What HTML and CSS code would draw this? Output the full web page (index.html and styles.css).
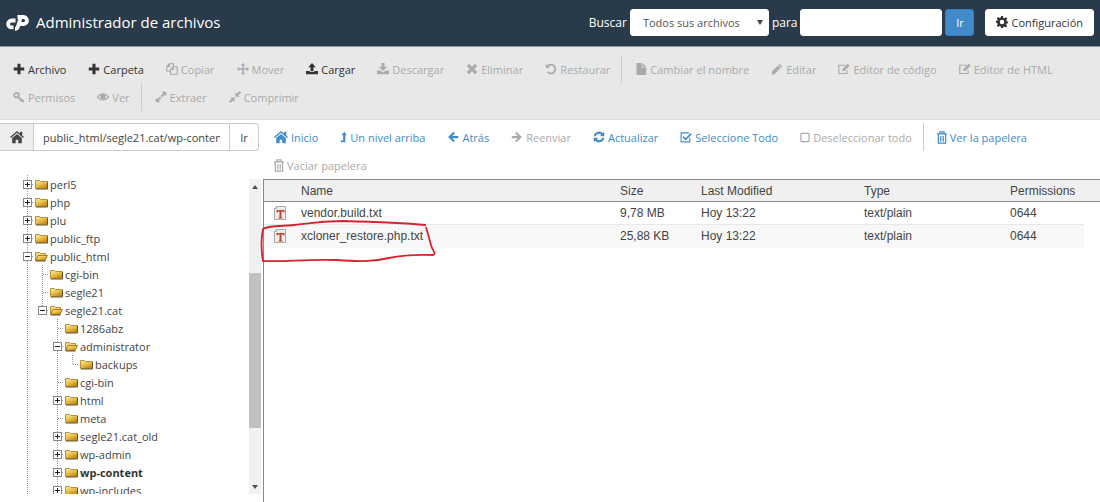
FILE: index.html
```html
<!DOCTYPE html>
<html lang="es">
<head>
    <meta charset="UTF-8">
    <meta name="viewport" content="width=device-width, initial-scale=1.0">
    <title>Administrador de archivos</title>
    <link rel="stylesheet" href="styles.css">
</head>
<body>
    <!-- Iconos -->
    <svg class="sprite" aria-hidden="true">
        <symbol id="plus" viewBox="0 0 16 16"><path d="M6 1h4v5h5v4h-5v5H6v-5H1V6h5z"/></symbol>
        <symbol id="copy" viewBox="0 0 16 16"><path d="M4.500 1H10v4M4.500 1L1 4.500V11h5M1 4.500h3.500V1M9.500 5H15v10H6V8.500L9.500 5zM6 8.500h3.500V5" class="line"/></symbol>
        <symbol id="move" viewBox="0 0 16 16"><path d="M8 0l3 3H9v4h4V5l3 3-3 3V9H9v4h2l-3 3-3-3h2V9H3v2L0 8l3-3v2h4V3H5z"/></symbol>
        <symbol id="upload" viewBox="0 0 16 16"><path d="M8 0l5 5.500h-3V11H6V5.500H3zM0 10.500h5V12h6v-1.500h5V15H0z"/></symbol>
        <symbol id="download" viewBox="0 0 16 16"><path d="M6 0h4v5h3.500L8 10.500 2.500 5H6zM0 10h4.500L8 13l3.500-3H16v5H0z"/></symbol>
        <symbol id="times" viewBox="0 0 16 16"><path d="M4 1l4 4 4-4 3 3-4 4 4 4-3 3-4-4-4 4-3-3 4-4-4-4z"/></symbol>
        <symbol id="undo" viewBox="0 0 16 16"><path d="M1 1l2 2a7 7 0 1 1-.500 9.500L4.500 11A4.500 4.500 0 1 0 4.800 4.800L6.500 6.500H1z"/></symbol>
        <symbol id="file" viewBox="0 0 16 16"><path d="M2 0h7v6h6v10H2zM10 0l5 5h-5z"/></symbol>
        <symbol id="pencil" viewBox="0 0 16 16"><path d="M11.500 1L15 4.500 13.500 6 10 2.500zM9.300 3.200l3.500 3.500L5 14.500 1 15.500 1.500 11z"/></symbol>
        <symbol id="edit" viewBox="0 0 16 16"><path d="M12 9.500V14H1V3h9" class="line"/><path d="M13 1l2.500 2.500-7 7H6V8z"/></symbol>
        <symbol id="key" viewBox="0 0 16 16"><path d="M4.500 2.500a3 3 0 1 0 .1 0zM6.500 8l8 6M11 11l-1.800 2.500M14 12l-2 2.800M7 4.500L9 3" class="line bold"/></symbol>
        <symbol id="eye" viewBox="0 0 16 16"><path d="M.500 8Q8-.500 15.500 8 8 16 .500 8z" class="line"/><circle cx="8" cy="7.500" r="3.500"/></symbol>
        <symbol id="expand" viewBox="0 0 16 16"><path d="M9 1h6v6l-2-2-3.500 3.500-2-2L11 3zM1 9l2 2 3.500-3.500 2 2L5 13l2 2H1z"/></symbol>
        <symbol id="compress" viewBox="0 0 16 16"><path d="M8.500 1.500l2 2L14 0l2 2-3.500 3.500 2 2h-6zM1.500 8.500h6v6l-2-2L2 16l-2-2 3.500-3.500z"/></symbol>
        <symbol id="home" viewBox="0 0 16 16"><path d="M8 1l3.500 3V2H14v4.200l2 1.800-1 1-7-6-7 6-1-1zM8 4.500l5.500 4.700V15H9.500v-4h-3v4h-4V9.200z"/></symbol>
        <symbol id="level-up" viewBox="0 0 9 16"><path d="M5.500 1L9 5.500H7V15H1.500L0 12.500h4v-7H2z"/></symbol>
        <symbol id="left" viewBox="0 0 16 16"><path d="M8.500 1l2 2-3.500 3.500H15v3H7l3.500 3.500-2 2-7-7z"/></symbol>
        <symbol id="right" viewBox="0 0 16 16"><path d="M7.500 1l-2 2L9 6.500H1v3h8L5.500 13l2 2 7-7z"/></symbol>
        <symbol id="refresh" viewBox="0 0 16 16"><path d="M1 7a7 7 0 0 1 12-4l2-2v6H9l2-2a4.500 4.500 0 0 0-7.500 2zM15 9a7 7 0 0 1-12 4l-2 2V9h6l-2 2a4.500 4.500 0 0 0 7.500-2z"/></symbol>
        <symbol id="check" viewBox="0 0 16 16"><path d="M13 9v5.500H1.500V2.500H12" class="line"/><path d="M4 7.500l3.500 3.500L15 3.500" class="line bold"/></symbol>
        <symbol id="square" viewBox="0 0 12 16"><rect x="1" y="3" width="10" height="10" rx="1" class="line"/></symbol>
        <symbol id="trash" viewBox="0 0 12 16"><path d="M0 3.500h12M3.500 3V1h5v2M1.500 4v11h9V4M4.500 6v7M7.500 6v7" class="line"/></symbol>
        <symbol id="cog" viewBox="0 0 16 16"><path fill-rule="evenodd" d="M6.700 0h2.600l.4 2.200 1.600.7L13.200 1.600 15 3.400l-1.300 1.900.7 1.600 1.600.300v2.500l-1.700.4-.7 1.600 1.300 1.900-1.800 1.800-1.900-1.300-1.500.7L9.300 16H6.700l-.4-2-1.600-.7-1.900 1.300L1 12.800l1.300-1.900-.7-1.600L0 9V6.800l1.700-.4.6-1.500L1 3.200 2.800 1.400l1.900 1.300 1.600-.6zM8 5a3 3 0 1 0 0 6 3 3 0 0 0 0-6z"/></symbol>
        <linearGradient id="gold" x2="0.600" y2="1"><stop stop-color="#fff0a0"/><stop offset="0.500" stop-color="#ecc552"/><stop offset="1" stop-color="#c68a18"/></linearGradient>
        <symbol id="folder" viewBox="0 0 13 11"><path d="M.500 9.500v-8h4l1 1h7v7z" fill="url(#gold)" stroke="#b8913a"/><path d="M1 10h11.500V3" fill="none" stroke="#68532a"/></symbol>
        <symbol id="folder-open" viewBox="0 0 13 11"><path d="M.500 9.500v-8h4l1 1h5v2" fill="#f3d675" stroke="#b8913a"/><path d="M.500 9.500l2.500-5h9.500L10 9.500z" fill="url(#gold)" stroke="#a97b22"/><path d="M1 10h9.500" stroke="#68532a"/></symbol>
        <symbol id="text-file" viewBox="0 0 12 15"><path d="M2.500 .500h9v13h-11v-11z" fill="#f1eeec" stroke="#aaa6a3"/><path d="M.500 2.500h2v-2" fill="#fff" stroke="#aaa6a3"/><path d="M2.500 4h8v2.500H9.500L9 5.500H7.500v6h1v1h-4v-1h1v-6H4l-.500 1h-1z" fill="#c1452f"/></symbol>
    </svg>

    <header class="header">
        <svg class="logo" viewBox="0 0 25 17" role="img" aria-label="cPanel">
            <path d="M10.500 6.500H6.500a3.400 3.400 0 0 0 0 6.800H8.500"/>
            <path d="M12.500 3h6a3.500 3.500 0 0 1 0 7H15M15.500 4L12.800 13q-.5 1.800-2.800 1.800"/>
        </svg>
        <h1>Administrador de archivos</h1>
        <form class="search">
            <label for="scope">Buscar</label>
            <select id="scope"><option>Todos sus archivos</option></select>
            <label for="query">para</label>
            <input id="query" type="text">
            <button type="button" class="primary">Ir</button>
            <button type="button" class="settings"><svg class="icon"><use href="#cog"/></svg>Configuración</button>
        </form>
    </header>

    <div class="toolbar">
        <button><svg class="icon"><use href="#plus"/></svg>Archivo</button>
        <button><svg class="icon"><use href="#plus"/></svg>Carpeta</button>
        <button disabled><svg class="icon"><use href="#copy"/></svg>Copiar</button>
        <button disabled><svg class="icon"><use href="#move"/></svg>Mover</button>
        <button><svg class="icon"><use href="#upload"/></svg>Cargar</button>
        <button disabled><svg class="icon"><use href="#download"/></svg>Descargar</button>
        <button disabled><svg class="icon"><use href="#times"/></svg>Eliminar</button>
        <button disabled class="divider"><svg class="icon"><use href="#undo"/></svg>Restaurar</button>
        <button disabled><svg class="icon"><use href="#file"/></svg>Cambiar el nombre</button>
        <button disabled><svg class="icon"><use href="#pencil"/></svg>Editar</button>
        <button disabled><svg class="icon"><use href="#edit"/></svg>Editor de código</button>
        <button disabled><svg class="icon"><use href="#edit"/></svg>Editor de HTML</button>
        <button disabled><svg class="icon"><use href="#key"/></svg>Permisos</button>
        <button disabled class="divider"><svg class="icon"><use href="#eye"/></svg>Ver</button>
        <button disabled><svg class="icon"><use href="#expand"/></svg>Extraer</button>
        <button disabled><svg class="icon"><use href="#compress"/></svg>Comprimir</button>
    </div>

    <main class="main">
        <aside class="sidebar">
            <form class="path">
                <button type="button" class="path-home" aria-label="Inicio"><svg class="icon"><use href="#home"/></svg></button>
                <input type="text" aria-label="Ruta" value="public_html/segle21.cat/wp-content">
                <button type="button" class="path-go">Ir</button>
            </form>
            <div class="tree-box">
                <ul class="tree">
                    <li><div class="row"><span class="toggle"></span><svg class="folder"><use href="#folder"/></svg>perl5</div></li>
                    <li><div class="row"><span class="toggle"></span><svg class="folder"><use href="#folder"/></svg>php</div></li>
                    <li><div class="row"><span class="toggle"></span><svg class="folder"><use href="#folder"/></svg>plu</div></li>
                    <li><div class="row"><span class="toggle"></span><svg class="folder"><use href="#folder"/></svg>public_ftp</div></li>
                    <li><div class="row"><span class="toggle open"></span><svg class="folder"><use href="#folder-open"/></svg>public_html</div>
                        <ul>
                            <li><div class="row"><svg class="folder"><use href="#folder"/></svg>cgi-bin</div></li>
                            <li><div class="row"><svg class="folder"><use href="#folder"/></svg>segle21</div></li>
                            <li class="last"><div class="row"><span class="toggle open"></span><svg class="folder"><use href="#folder-open"/></svg>segle21.cat</div>
                                <ul>
                                    <li><div class="row"><svg class="folder"><use href="#folder"/></svg>1286abz</div></li>
                                    <li><div class="row"><span class="toggle open"></span><svg class="folder"><use href="#folder-open"/></svg>administrator</div>
                                        <ul>
                                            <li class="last"><div class="row"><svg class="folder"><use href="#folder"/></svg>backups</div></li>
                                        </ul>
                                    </li>
                                    <li><div class="row"><svg class="folder"><use href="#folder"/></svg>cgi-bin</div></li>
                                    <li><div class="row"><span class="toggle"></span><svg class="folder"><use href="#folder"/></svg>html</div></li>
                                    <li><div class="row"><svg class="folder"><use href="#folder"/></svg>meta</div></li>
                                    <li><div class="row"><span class="toggle"></span><svg class="folder"><use href="#folder"/></svg>segle21.cat_old</div></li>
                                    <li><div class="row"><span class="toggle"></span><svg class="folder"><use href="#folder"/></svg>wp-admin</div></li>
                                    <li><div class="row current"><span class="toggle"></span><svg class="folder"><use href="#folder"/></svg>wp-content</div></li>
                                    <li><div class="row"><span class="toggle"></span><svg class="folder"><use href="#folder"/></svg>wp-includes</div></li>
                                </ul>
                            </li>
                        </ul>
                    </li>
                </ul>
                <div class="scrollbar">
                    <span class="arrow up"></span>
                    <div class="track"><div class="thumb"></div></div>
                    <span class="arrow down"></span>
                </div>
            </div>
        </aside>

        <section class="files">
            <nav class="actions">
                <button><svg class="icon big"><use href="#home"/></svg>Inicio</button>
                <button><svg class="icon thin"><use href="#level-up"/></svg>Un nivel arriba</button>
                <button><svg class="icon"><use href="#left"/></svg>Atrás</button>
                <button disabled><svg class="icon"><use href="#right"/></svg>Reenviar</button>
                <button><svg class="icon"><use href="#refresh"/></svg>Actualizar</button>
                <button><svg class="icon"><use href="#check"/></svg>Seleccione Todo</button>
                <button disabled class="divider"><svg class="icon small"><use href="#square"/></svg>Deseleccionar todo</button>
                <button><svg class="icon small"><use href="#trash"/></svg>Ver la papelera</button>
                <button disabled><svg class="icon small"><use href="#trash"/></svg>Vaciar papelera</button>
            </nav>
            <div class="list">
                <table>
                    <thead>
                        <tr><th class="c-icon"></th><th>Name</th><th class="c-size">Size</th><th class="c-date">Last Modified</th><th class="c-type">Type</th><th class="c-perm">Permissions</th><th class="c-end"></th></tr>
                    </thead>
                    <tbody>
                        <tr><td><svg class="doc"><use href="#text-file"/></svg></td><td>vendor.build.txt</td><td>9,78 MB</td><td>Hoy 13:22</td><td>text/plain</td><td>0644</td><td class="c-end"></td></tr>
                        <tr><td><svg class="doc"><use href="#text-file"/></svg></td><td>xcloner_restore.php.txt</td><td>25,88 KB</td><td>Hoy 13:22</td><td>text/plain</td><td>0644</td><td class="c-end"></td></tr>
                    </tbody>
                </table>
                <!-- Marca roja sobre el archivo -->
                <svg class="mark" viewBox="0 0 180 46"><path d="M167 6C145 4 120 3 84 2 50 2 48 6 20 7Q6 8 4 10 1 24 4 42C28 43 45 40 78 41 105 43 116 42 130 39 150 35 158 36 174 36 178 35 173 31 172 26L167 8"/></svg>
            </div>
        </section>
    </main>
</body>
</html>
```
FILE: styles.css
```css
* {
    box-sizing: border-box;
}

body {
    margin: 0;
    height: 100vh;
    display: flex;
    flex-direction: column;
    overflow: hidden;
    background: #fff;
    color: #444;
    font-family: "Open Sans", sans-serif;
    font-size: 11px;
}

button,
input,
select {
    font: inherit;
    color: inherit;
    margin: 0;
}

button {
    cursor: pointer;
}

.sprite {
    position: absolute;
    width: 0;
    height: 0;
}

.line {
    fill: none;
    stroke: currentColor;
    stroke-width: 1.5;
}

.bold {
    stroke-width: 2.2;
}

.icon {
    width: 12px;
    height: 12px;
    flex: none;
    fill: currentColor;
}

.icon.big {
    width: 14px;
    height: 14px;
}

.icon.small {
    width: 10px;
    height: 13px;
}

.icon.thin {
    width: 7px;
}

/* Cabecera */
.header {
    display: flex;
    align-items: center;
    height: 47px;
    flex: none;
    padding: 0 6px 2px 5px;
    background: #293a4a;
    border-bottom: 1px solid #8897a5;
    color: #fff;
}

.logo {
    width: 25px;
    height: 17px;
    fill: none;
    stroke: #fff;
    stroke-width: 3.8;
}

.header h1 {
    margin: 0 0 0 6px;
    font-size: 15px;
    font-weight: 400;
}

.search {
    display: flex;
    align-items: center;
    gap: 3px;
    margin-left: auto;
}

.search label {
    font-size: 12px;
}

.search select,
.search input,
.search button {
    height: 27px;
    border: 1px solid #fff;
    border-radius: 3px;
    background: #fff;
    color: #555;
}

.search select {
    width: 139px;
    padding: 0 12px;
    appearance: none;
    background: #fff url("data:image/svg+xml,%3Csvg xmlns='http://www.w3.org/2000/svg' viewBox='0 0 6 5'%3E%3Cpath d='M0 0h6L3 5z' fill='%23444'/%3E%3C/svg%3E") no-repeat right 5px center / 6px 5px;
}

.search input {
    width: 142px;
}

.search .primary {
    width: 29px;
    padding: 0;
    background: #428bca;
    border-color: #357ebd;
    color: #fff;
}

.search .settings {
    display: flex;
    align-items: center;
    gap: 3px;
    margin-left: 8px;
    padding: 0 10px;
    color: #333;
}

/* Barras de botones */
.toolbar,
.actions {
    display: flex;
    flex-wrap: wrap;
    flex: none;
}

.toolbar {
    padding: 8px 2px;
    background: #e8e8e8;
    border-bottom: 1px solid #ddd;
}

.toolbar button,
.actions button {
    display: flex;
    align-items: center;
    gap: 3px;
    height: 28px;
    padding: 0 11px;
    border: 0;
    background: none;
    color: #333;
    white-space: nowrap;
}

.toolbar button:disabled,
.actions button:disabled {
    color: #aaa;
    cursor: default;
}

.toolbar .divider,
.actions .divider {
    margin-right: 2px;
    border-right: 1px solid #ccc;
}

.actions button {
    color: #428bca;
}

/* Zona principal */
.main {
    display: flex;
    flex: 1;
    min-height: 0;
    padding-top: 3px;
}

.sidebar {
    display: flex;
    flex-direction: column;
    width: 263px;
    flex: none;
    padding-bottom: 8px;
}

.path {
    display: flex;
    height: 28px;
    flex: none;
    margin-right: 4px;
    border: 1px solid #ccc;
    border-left: 0;
    border-radius: 0 4px 4px 0;
}

.path input {
    flex: 1;
    min-width: 0;
    padding: 0 9px;
    border: 0;
    background: none;
}

.path button {
    display: flex;
    align-items: center;
    justify-content: center;
    padding: 0;
    border: 0;
    background: none;
}

.path .path-home {
    width: 34px;
    background: #eee;
    border-right: 1px solid #ccc;
}

.path .path-home .icon {
    width: 14px;
    height: 14px;
}

.path .path-go {
    width: 29px;
    border-left: 1px solid #ccc;
}

.tree-box {
    display: flex;
    flex: 1;
    min-height: 0;
    margin-top: 24px;
    padding-left: 20px;
    overflow: hidden;
}

.tree,
.tree ul {
    margin: 0;
    padding: 0;
    list-style: none;
}

.tree {
    flex: 1;
}

.tree ul {
    padding-left: 15px;
}

/* Linea punteada de cada nivel */
.tree li {
    background: repeating-linear-gradient(#999 0 1px, #fff 1px 2px) 7px 0 / 1px 100% no-repeat;
}

.tree li.last {
    background-size: 1px 9px;
}

.row {
    display: flex;
    align-items: center;
    gap: 2px;
    height: 18px;
    position: relative;
    padding-left: 15px;
    background: repeating-linear-gradient(90deg, #999 0 1px, #fff 1px 2px) 8px 9px / 6px 1px no-repeat;
    white-space: nowrap;
}

.current {
    font-weight: 700;
    color: #333;
}

.folder {
    width: 13px;
    height: 11px;
}

.toggle {
    position: absolute;
    left: 3px;
    top: 5px;
    width: 9px;
    height: 9px;
    border: 1px solid #888;
    background:
        linear-gradient(#222, #222) center / 5px 1px no-repeat,
        linear-gradient(#222, #222) center / 1px 5px no-repeat,
        #fff;
}

.toggle.open {
    background: linear-gradient(#222, #222) center / 5px 1px no-repeat, #fff;
}

.scrollbar {
    display: flex;
    flex-direction: column;
    width: 12px;
    margin: 4px 2px 0 0;
    background: #f1f1f1;
}

.arrow {
    height: 15px;
    flex: none;
    display: flex;
    align-items: center;
    justify-content: center;
}

.arrow::before {
    content: '';
    border: 3px solid transparent;
    border-top-width: 0;
    border-bottom: 4px solid #505050;
}

.arrow.down::before {
    border-bottom: 0;
    border-top: 4px solid #505050;
}

.track {
    flex: 1;
    display: flex;
    flex-direction: column;
    justify-content: center;
    padding-top: 28px;
}

.thumb {
    height: 60%;
    background: #c1c1c1;
}

/* Lista de archivos */
.files {
    display: flex;
    flex-direction: column;
    flex: 1;
    min-width: 0;
}

.list {
    position: relative;
    flex: 1;
    border-left: 1px solid #888;
    border-top: 1px solid #888;
    font-family: "Liberation Sans", Arial, sans-serif;
    font-size: 12px;
    color: #444;
}

table {
    width: 100%;
    table-layout: fixed;
    border-collapse: separate;
    border-spacing: 0;
}

th,
td {
    height: 23px;
    padding: 0;
    font-weight: 400;
    text-align: left;
}

th {
    height: 22px;
    background: #f0f0f0;
    border-bottom: 1px solid #888;
}

td {
    border-bottom: 1px solid #e8e8e8;
}

tr:nth-child(2) td {
    background: #f8f8f8;
    border-bottom-color: #f8f8f8;
}

tr td.c-end {
    border: 0;
    background: none;
}

.c-icon {
    width: 37px;
}

.c-size {
    width: 81px;
}

.c-date {
    width: 163px;
}

.c-type {
    width: 146px;
}

.c-perm {
    width: 74px;
}

.c-end {
    width: 16px;
}

.doc {
    display: block;
    width: 12px;
    height: 15px;
    margin-left: 10px;
}

.mark {
    position: absolute;
    left: -5px;
    top: 39px;
    width: 180px;
    height: 46px;
    fill: none;
    stroke: #d8232e;
    stroke-width: 1.8;
}
```
